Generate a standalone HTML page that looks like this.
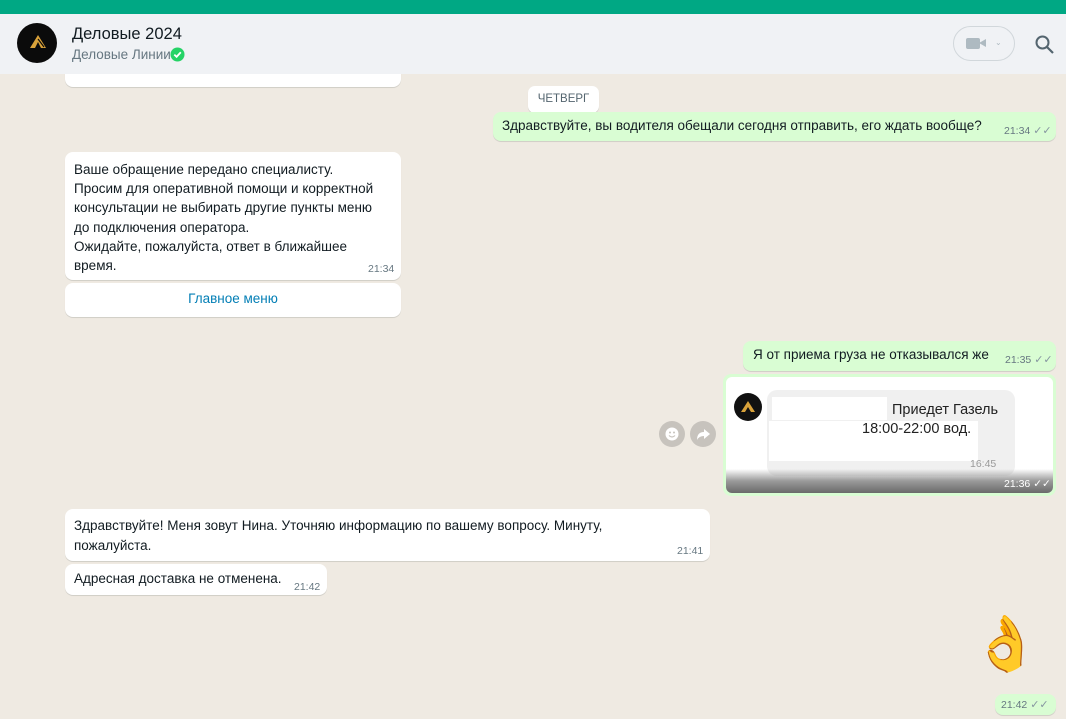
<!DOCTYPE html>
<html><head><meta charset="utf-8"><style>
*{margin:0;padding:0;box-sizing:border-box}
body{width:1066px;height:719px;overflow:hidden;background:#efeae2;font-family:"Liberation Sans",sans-serif;font-size:13.5px;color:#111b21;position:relative}
.abs{position:absolute}
.in{background:#fff;border-radius:8px;box-shadow:0 1px 0.5px rgba(11,20,26,.13)}
.out{background:#d9fdd3;border-radius:8px;box-shadow:0 1px 0.5px rgba(11,20,26,.13)}
.t{font-size:10.5px;color:#667781;position:absolute}
.tk{color:#8696a0;font-size:11px}
</style></head><body>
<div class="in abs" style="left:65px;top:60px;width:336px;height:27px"></div>
<div class="abs" style="left:0;top:0;width:1066px;height:14px;background:#00a884"></div>
<div class="abs" style="left:0;top:14px;width:1066px;height:60px;background:#f0f2f5"></div>
<div class="abs" style="left:17px;top:23px;width:40px;height:40px;border-radius:50%;background:#0b0b0b"></div>
<svg class="abs" style="left:28px;top:33px" width="19" height="18" viewBox="0 0 19 18"><path d="M2 15 L10 2 L18 15 L13 15 L10 9 L7 15 Z" fill="#d9a23a"/><path d="M10 6 L16 14" stroke="#0b0b0b" stroke-width="1.2"/></svg>
<div class="abs" style="left:72px;top:25px;font-size:16.5px;color:#111b21">Деловые 2024</div>
<div class="abs" style="left:72px;top:47px;font-size:13.5px;color:#667781">Деловые Линии</div>
<svg class="abs" style="left:170px;top:47px" width="15" height="15" viewBox="0 0 15 15"><circle cx="7.5" cy="7.5" r="7" fill="#25d366"/><path d="M4.3 7.6 L6.6 9.8 L10.8 5.3" stroke="#fff" stroke-width="1.8" fill="none"/></svg>
<div class="abs" style="left:953px;top:26px;width:62px;height:35px;border:1px solid #d1d7db;border-radius:18px"></div>
<div class="abs" style="left:966px;top:38px;width:14px;height:11px;background:#aebac1;border-radius:2px"></div>
<div class="abs" style="left:979px;top:39px;width:0;height:0;border-top:4px solid transparent;border-bottom:4px solid transparent;border-right:7px solid #aebac1"></div>
<div class="abs" style="left:995px;top:38px;font-size:8px;color:#aebac1">⌄</div>
<svg class="abs" style="left:1034px;top:34px" width="22" height="22" viewBox="0 0 22 22"><circle cx="8.5" cy="8.5" r="6" stroke="#54656f" stroke-width="2" fill="none"/><path d="M13 13 L19 19" stroke="#54656f" stroke-width="2.2"/></svg>

<div class="abs" style="left:528px;top:86px;width:71px;height:27px;background:#fff;border-radius:7px;font-size:11.5px;color:#54656f;text-align:center;line-height:27px;box-shadow:0 1px 0.5px rgba(11,20,26,.13)">ЧЕТВЕРГ</div>

<div class="out abs" style="left:493px;top:112px;width:563px;height:29px">
<div class="abs" style="left:9px;top:6px;white-space:nowrap">Здравствуйте, вы водителя обещали сегодня отправить, его ждать вообще?</div>
<div class="t" style="left:511px;top:12px">21:34 <span class="tk">✓✓</span></div></div>

<div class="in abs" style="left:65px;top:152px;width:336px;height:128px">
<div class="abs" style="left:9px;top:8px;line-height:19.2px;white-space:nowrap">Ваше обращение передано специалисту.<br>Просим для оперативной помощи и корректной<br>консультации не выбирать другие пункты меню<br>до подключения оператора.<br>Ожидайте, пожалуйста, ответ в ближайшее<br>время.</div>
<div class="t" style="left:303px;top:111px">21:34</div></div>
<div class="in abs" style="left:65px;top:283px;width:336px;height:34px;text-align:center;line-height:32px;color:#027eb5">Главное меню</div>

<div class="out abs" style="left:743px;top:341px;width:313px;height:30px">
<div class="abs" style="left:10px;top:6px;white-space:nowrap">Я от приема груза не отказывался же</div>
<div class="t" style="left:262px;top:12px">21:35 <span class="tk">✓✓</span></div></div>

<div class="abs" style="left:659px;top:421px;width:26px;height:26px;border-radius:50%;background:#c7c3bd"></div>
<svg class="abs" style="left:664px;top:426px" width="16" height="16" viewBox="0 0 16 16"><circle cx="8" cy="8" r="6.5" fill="#fff"/><circle cx="6" cy="6.5" r="1" fill="#c7c3bd"/><circle cx="10" cy="6.5" r="1" fill="#c7c3bd"/><path d="M5 9.5 Q8 12.5 11 9.5" stroke="#c7c3bd" stroke-width="1.2" fill="none"/></svg>
<div class="abs" style="left:690px;top:421px;width:26px;height:26px;border-radius:50%;background:#c7c3bd"></div>
<svg class="abs" style="left:694px;top:425px" width="18" height="18" viewBox="0 0 18 18"><path d="M10 4 L16 9 L10 14 L10 11 Q5 11 3 15 Q3 7 10 7 Z" fill="#fff"/></svg>

<div class="abs" style="left:723px;top:374px;width:333px;height:122px;background:#d9fdd3;border-radius:8px;padding:3px">
<div style="position:relative;width:327px;height:116px;background:#fff;border-radius:6px;overflow:hidden">
<div class="abs" style="left:41px;top:13px;width:248px;height:86px;background:#f0f0f0;border-radius:10px"></div>
<div class="abs" style="left:46px;top:20px;width:115px;height:23px;background:#fff"></div>
<div class="abs" style="left:43px;top:44px;width:209px;height:40px;background:#fff"></div>
<div class="abs" style="left:8px;top:16px;width:28px;height:28px;border-radius:50%;background:#111"></div>
<svg class="abs" style="left:14px;top:22px" width="16" height="15" viewBox="0 0 16 15"><path d="M1 13 L8 2 L15 13 L11 13 L8 8 L5 13 Z" fill="#d9a23a"/></svg>
<div class="abs" style="left:166px;top:25px;font-size:14.5px;color:#222">Приедет Газель</div>
<div class="abs" style="left:136px;top:44px;font-size:14.5px;color:#222">18:00-22:00 вод.</div>
<div class="abs" style="left:244px;top:81px;font-size:10.5px;color:#999">16:45</div>
<div class="abs" style="left:0;top:92px;width:327px;height:24px;background:linear-gradient(rgba(255,255,255,0),#9a9a9a 50%,#6a6a6a)"></div>
<div class="abs" style="left:278px;top:101px;font-size:10.5px;color:#fff">21:36 ✓✓</div>
</div></div>

<div class="in abs" style="left:65px;top:509px;width:645px;height:52px">
<div class="abs" style="left:9px;top:7px;line-height:19.5px;white-space:nowrap">Здравствуйте! Меня зовут Нина. Уточняю информацию по вашему вопросу. Минуту,<br>пожалуйста.</div>
<div class="t" style="left:612px;top:36px">21:41</div></div>
<div class="in abs" style="left:65px;top:564px;width:262px;height:31px">
<div class="abs" style="left:9px;top:7px;white-space:nowrap">Адресная доставка не отменена.</div>
<div class="t" style="left:229px;top:17px">21:42</div></div>

<div class="abs" style="left:972px;top:618px;font-size:54px;line-height:1;font-family:'Noto Color Emoji',sans-serif">👌</div>
<div class="out abs" style="left:995px;top:694px;width:61px;height:21px">
<div class="t" style="left:6px;top:4px">21:42 <span class="tk">✓✓</span></div></div>
</body></html>
